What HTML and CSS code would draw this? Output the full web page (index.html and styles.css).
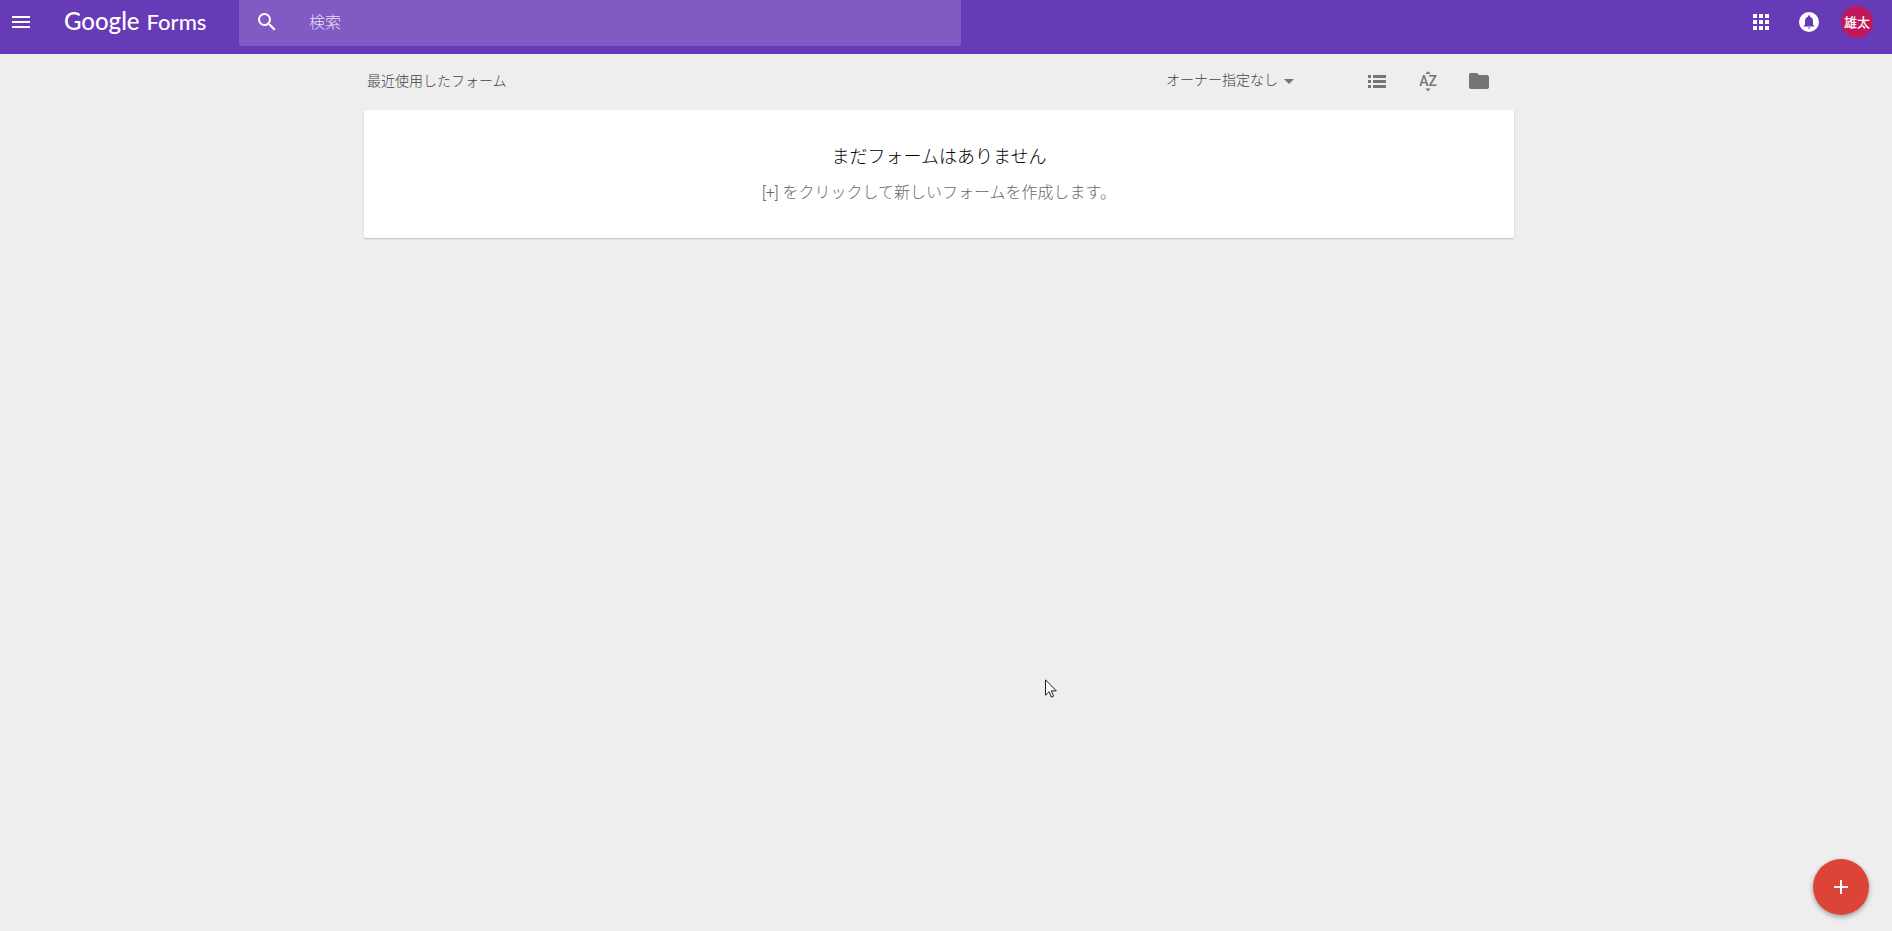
FILE: index.html
```html
<!DOCTYPE html>
<html lang="ja">
<head>
<meta charset="utf-8">
<title>Google Forms</title>
<link rel="stylesheet" href="styles.css">
</head>
<body>
<header class="header">
  <button class="icon-button menu" aria-label="メニュー">
    <svg viewBox="0 0 24 24"><path d="M3 18h18v-2H3v2zm0-5h18v-2H3v2zm0-7v2h18V6H3z"/></svg>
  </button>
  <a class="logo" href="#"><span class="logo-brand">Google</span><span class="logo-product">Forms</span></a>
  <form class="search">
    <button class="icon-button" type="button" aria-label="検索を実行">
      <svg viewBox="0 0 24 24"><path d="M15.5 14h-.79l-.28-.27A6.47 6.47 0 0 0 16 9.500 6.500 6.500 0 1 0 9.500 16c1.610 0 3.090-.59 4.230-1.570l.27.28v.79l5 4.990L20.490 19l-4.990-5zm-6 0C7.010 14 5 11.990 5 9.500S7.010 5 9.500 5 14 7.010 14 9.500 11.990 14 9.500 14z"/></svg>
    </button>
    <input class="search-input" type="text" placeholder="検索" aria-label="検索">
  </form>
  <nav class="account">
    <button class="icon-button" aria-label="アプリ">
      <svg viewBox="0 0 24 24"><path d="M4 8h4V4H4v4zm6 12h4v-4h-4v4zm-6 0h4v-4H4v4zm0-6h4v-4H4v4zm6 0h4v-4h-4v4zm6-10v4h4V4h-4zm-6 4h4V4h-4v4zm6 6h4v-4h-4v4zm0 6h4v-4h-4v4z"/></svg>
    </button>
    <button class="icon-button" aria-label="通知">
      <svg viewBox="0 0 24 24"><circle cx="12" cy="12" r="10"/><path class="bell" d="M12 18.500c.8 0 1.400-.5 1.400-1h-2.800c0 .5.6 1 1.400 1zM16 14.800V11c0-2.300-1.200-3.900-3-4.300v-.4a1 1 0 0 0-2 0v.4C9.200 7.100 8 8.700 8 11v3.800l-1.200 1v.7h10.400v-.7z"/></svg>
    </button>
    <button class="avatar" aria-label="アカウント">雄太</button>
  </nav>
</header>
<main class="main">
  <div class="toolbar">
    <h1 class="toolbar-title">最近使用したフォーム</h1>
    <div class="owner">
      <select class="owner-select" aria-label="オーナー"><option>オーナー指定なし</option></select>
      <svg class="owner-arrow" viewBox="0 0 10 5"><path d="M0 0h10L5 5z"/></svg>
    </div>
    <div class="actions">
      <button class="icon-button" aria-label="リスト表示">
        <svg viewBox="0 0 24 24"><path d="M3 6h3v3H3zM3 11h3v3H3zM3 16h3v3H3zM8 6h13v3H8zM8 11h13v3H8zM8 16h13v3H8z"/></svg>
      </button>
      <button class="icon-button" aria-label="並べ替え">
        <svg viewBox="0 0 24 24"><path d="M9.300 5h5.400L12 2.300zM14.700 19.500H9.300l2.700 2.700z"/><text class="sort-label" x="12" y="17" text-anchor="middle">AZ</text></svg>
      </button>
      <button class="icon-button" aria-label="ファイル選択ツールを開く">
        <svg viewBox="0 0 24 24"><path d="M10 4H4c-1.100 0-2 .9-2 2v12c0 1.100.9 2 2 2h16c1.100 0 2-.9 2-2V8c0-1.100-.9-2-2-2h-8l-2-2z"/></svg>
      </button>
    </div>
  </div>
  <section class="empty">
    <h2 class="empty-title">まだフォームはありません</h2>
    <p class="empty-text">[+] をクリックして新しいフォームを作成します。</p>
  </section>
</main>
<button class="fab" aria-label="新しいフォームを作成">
  <svg viewBox="0 0 24 24"><path d="M19 13h-6v6h-2v-6H5v-2h6V5h2v6h6z"/></svg>
</button>
<svg class="pointer" viewBox="0 0 12 19"><path d="M.5.8v15.400l3.600-3.500 2.300 5.400 2.200-.9-2.300-5.300h5z"/></svg>
</body>
</html>
```
FILE: styles.css
```css
* {
  box-sizing: border-box;
}

body {
  margin: 0;
  min-height: 100vh;
  background: #eeeeee;
  font-family: Roboto, "Noto Sans CJK JP", sans-serif;
}

button {
  border: 0;
  padding: 0;
  background: none;
  font-family: inherit;
  cursor: pointer;
}

.icon-button {
  flex: none;
  width: 24px;
  height: 24px;
  color: inherit;
}

.icon-button svg {
  display: block;
  width: 24px;
  height: 24px;
  fill: currentColor;
}

.header {
  display: flex;
  align-items: center;
  padding: 0 19px 10px 9px;
  height: 54px;
  background: #673ab7;
  color: #ffffff;
}

.logo {
  display: flex;
  flex: none;
  align-items: baseline;
  gap: 7px;
  width: 175px;
  margin-left: 31px;
  padding-bottom: 2px;
  color: inherit;
  font-family: Lato, sans-serif;
  font-weight: 500;
  line-height: 28px;
  text-decoration: none;
}

.logo-brand {
  font-size: 24px;
}

.logo-product {
  font-size: 22px;
}

.search {
  display: flex;
  flex: 0 1 722px;
  align-self: flex-start;
  align-items: center;
  gap: 30px;
  height: 46px;
  padding: 0 16px 2px;
  border-radius: 0 0 3px 3px;
  background: #815bc3;
}

.search-input {
  flex: 1;
  min-width: 0;
  border: 0;
  padding: 2px 0 0;
  background: none;
  color: #ffffff;
  font: 300 16px/24px Roboto, "Noto Sans CJK JP", sans-serif;
  outline: none;
}

.search-input::placeholder {
  color: #e6def4;
}

.account {
  display: flex;
  align-items: center;
  gap: 24px;
  margin-left: auto;
}

.avatar {
  width: 32px;
  height: 32px;
  margin-left: -4px;
  padding-bottom: 2px;
  border-radius: 50%;
  background: #c2185b;
  color: #ffffff;
  font-size: 13px;
  font-weight: 500;
}

.bell {
  fill: #673ab7;
}

.main {
  width: 1164px;
  max-width: 100%;
  margin: 0 auto;
  padding-right: 14px;
}

.toolbar {
  display: flex;
  align-items: center;
  height: 56px;
  padding: 0 23px 2px 3px;
  color: #424242;
}

.toolbar-title {
  margin: 0 auto 0 0;
  font-size: 14px;
  font-weight: 300;
  line-height: 20px;
}

.owner {
  display: flex;
  align-items: center;
  margin-right: 71px;
}

.owner-select {
  appearance: none;
  border: 0;
  margin-right: -14px;
  padding: 0 20px 2px 0;
  background: none;
  color: inherit;
  font: 300 14px/20px Roboto, "Noto Sans CJK JP", sans-serif;
}

.owner-arrow {
  width: 10px;
  height: 5px;
  fill: #757575;
  pointer-events: none;
}

.actions {
  display: flex;
  gap: 27px;
  color: #757575;
}

.sort-label {
  font-size: 14px;
  font-weight: 500;
}

.empty {
  padding: 33px 16px;
  border-radius: 2px;
  background: #ffffff;
  box-shadow: 0 1px 2px rgba(0, 0, 0, 0.2);
  text-align: center;
}

.empty-title {
  margin: 0 0 10px;
  color: #000000;
  font-size: 18px;
  font-weight: 300;
  line-height: 28px;
}

.empty-text {
  margin: 0;
  color: #666666;
  font-size: 16px;
  font-weight: 300;
  line-height: 24px;
}

.fab {
  position: fixed;
  right: 23px;
  bottom: 16px;
  display: grid;
  place-items: center;
  width: 56px;
  height: 56px;
  border-radius: 50%;
  background: #db4437;
  box-shadow: 0 2px 5px rgba(0, 0, 0, 0.35);
}

.fab svg {
  width: 24px;
  height: 24px;
  fill: #ffffff;
}

.pointer {
  position: absolute;
  left: 1045px;
  top: 679px;
  width: 12px;
  height: 19px;
  fill: #ffffff;
  stroke: #1c1c28;
  pointer-events: none;
}
```
